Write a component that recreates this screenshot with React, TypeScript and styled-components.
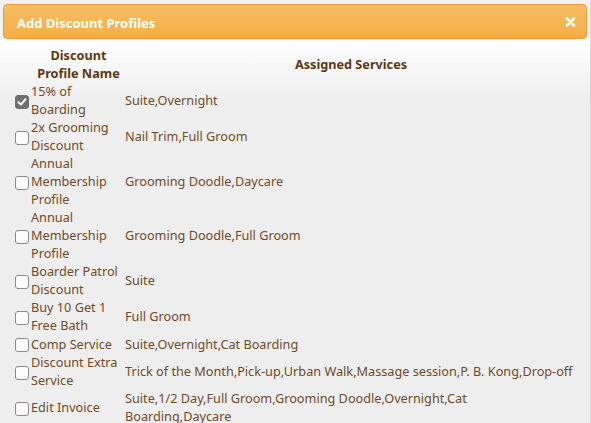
import React from "react";
import styled, { createGlobalStyle } from "styled-components";

const GlobalStyle = createGlobalStyle`
  html, body {
    margin: 0;
    padding: 0;
    background: #eeeeee;
  }
  body {
    font-family: "Noto Sans", "Open Sans", sans-serif;
  }
`;

type Profile = {
  name: string[];
  services: string[];
  checked?: boolean;
};

const profiles: Profile[] = [
  { name: ["15% of", "Boarding"], services: ["Suite,Overnight"], checked: true },
  { name: ["2x Grooming", "Discount"], services: ["Nail Trim,Full Groom"] },
  { name: ["Annual", "Membership", "Profile"], services: ["Grooming Doodle,Daycare"] },
  { name: ["Annual", "Membership", "Profile"], services: ["Grooming Doodle,Full Groom"] },
  { name: ["Boarder Patrol", "Discount"], services: ["Suite"] },
  { name: ["Buy 10 Get 1", "Free Bath"], services: ["Full Groom"] },
  { name: ["Comp Service"], services: ["Suite,Overnight,Cat Boarding"] },
  { name: ["Discount Extra", "Service"], services: ["Trick of the Month,Pick-up,Urban Walk,Massage session,P. B. Kong,Drop-off"] },
  { name: ["Edit Invoice"], services: ["Suite,1/2 Day,Full Groom,Grooming Doodle,Overnight,Cat", "Boarding,Daycare"] },
];

const Dialog = styled.div`
  box-sizing: border-box;
  width: 591px;
  height: 423px;
  overflow: hidden;
  padding: 4px 3px 0 3px;
  border-right: 1px solid #d9d9d9;
  background: linear-gradient(to bottom, #f2f2f2 0px, #f2f2f2 38px, #ffffff 39px, #eeeeee 100px, #eeeeee 100%);
`;

const TitleBar = styled.div`
  box-sizing: border-box;
  height: 35px;
  display: flex;
  align-items: center;
  justify-content: space-between;
  padding: 2px 10px 0 13px;
  border: 1px solid #eb9b3b;
  border-radius: 4px;
  background: linear-gradient(to bottom, #f6bd63 0%, #f5ae46 100%);
  color: #ffffff;
`;

const Title = styled.span`
  font-size: 13px;
  font-weight: 700;
`;

const CloseButton = styled.span`
  display: flex;
  margin-top: -2px;
`;

const Table = styled.table`
  border-collapse: collapse;
  margin: 7px 0 0 10px;
  width: 565px;
  font-size: 12.7px;
  line-height: 18px;
  color: #714b26;
`;

const HeadCell = styled.th<{ $w?: number; $shift?: number }>`
  width: ${(p) => (p.$w ? `${p.$w}px` : "auto")};
  padding: 0 0 0 ${(p) => p.$shift ?? 0}px;
  font-weight: 700;
  color: #5c3811;
  text-align: center;
  vertical-align: middle;
`;

const Cell = styled.td`
  padding: 0;
  vertical-align: middle;
  white-space: nowrap;
`;

const NameWrap = styled.label`
  display: flex;
  align-items: center;
  gap: 2px;
`;

const Box = styled.span<{ $checked?: boolean }>`
  box-sizing: border-box;
  flex: none;
  width: 14px;
  height: 14px;
  margin: 4px 0 1px 2px;
  border-radius: 3px;
  border: 1px solid ${(p) => (p.$checked ? "#6f6f6f" : "#8a8a8a")};
  background: ${(p) => (p.$checked ? "#6f6f6f" : "#ffffff")};
  display: flex;
  align-items: center;
  justify-content: center;
`;

const ServiceText = styled.div`
  padding-left: 1px;
`;

const Check = () => (
  <svg width="10" height="10" viewBox="0 0 10 10">
    <path d="M1.5 5.2 L4 7.6 L8.6 2.2" fill="none" stroke="#ffffff" strokeWidth="2" strokeLinecap="round" strokeLinejoin="round" />
  </svg>
);

const CloseIcon = () => (
  <svg width="11" height="10" viewBox="0 0 11 10">
    <path d="M2 1.5 L9 8.5 M9 1.5 L2 8.5" fill="none" stroke="#ffffff" strokeWidth="2.8" strokeLinecap="round" />
  </svg>
);

const Lines = ({ lines }: { lines: string[] }) => (
  <>
    {lines.map((l, i) => (
      <React.Fragment key={i}>
        {i > 0 && <br />}
        {l}
      </React.Fragment>
    ))}
  </>
);

export default function App() {
  return (
    <>
      <GlobalStyle />
      <Dialog>
        <TitleBar>
          <Title>Add Discount Profiles</Title>
          <CloseButton>
            <CloseIcon />
          </CloseButton>
        </TitleBar>
        <Table>
          <thead>
            <tr>
              <HeadCell $w={91} $shift={20}>
                Discount
                <br />
                Profile Name
              </HeadCell>
              <HeadCell>Assigned Services</HeadCell>
            </tr>
          </thead>
          <tbody>
            {profiles.map((p, i) => (
              <tr key={i}>
                <Cell>
                  <NameWrap>
                    <Box $checked={p.checked}>{p.checked && <Check />}</Box>
                    <span>
                      <Lines lines={p.name} />
                    </span>
                  </NameWrap>
                </Cell>
                <Cell>
                  <ServiceText>
                    <Lines lines={p.services} />
                  </ServiceText>
                </Cell>
              </tr>
            ))}
          </tbody>
        </Table>
      </Dialog>
    </>
  );
}
